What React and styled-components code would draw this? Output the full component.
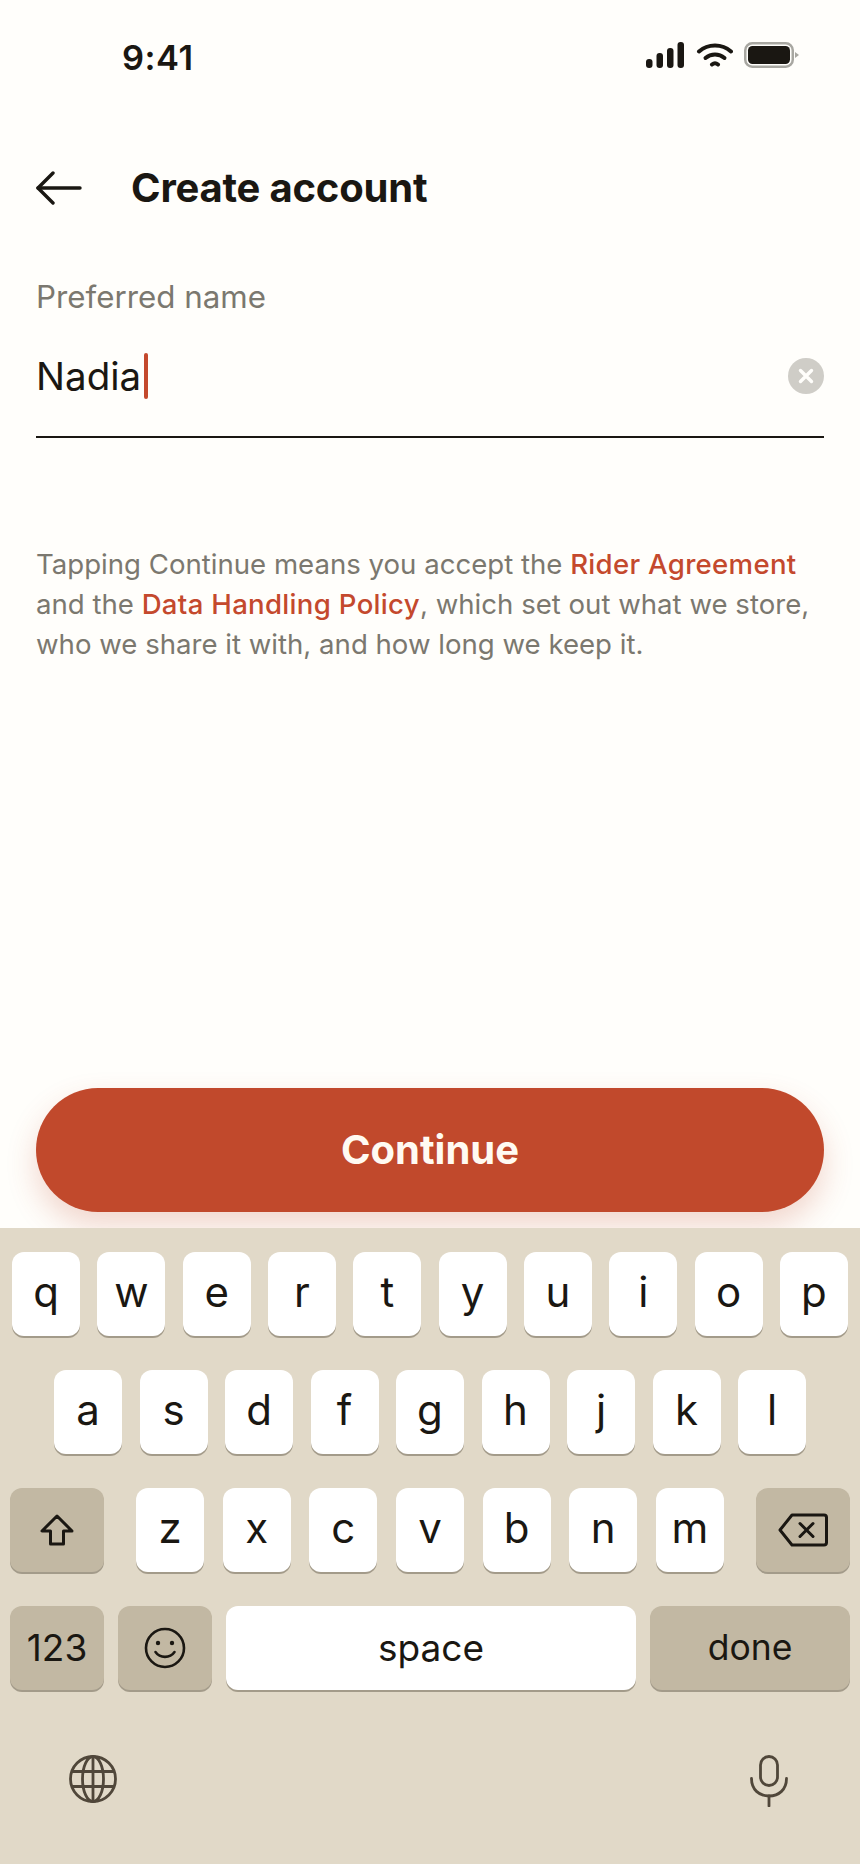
import React from "react";
import styled, { createGlobalStyle } from "styled-components";

const GlobalStyle = createGlobalStyle`
  html, body {
    margin: 0;
    padding: 0;
    background: #fffefb;
  }
  * {
    box-sizing: border-box;
  }
`;

const ROW_ONE = ["q", "w", "e", "r", "t", "y", "u", "i", "o", "p"];
const ROW_TWO = ["a", "s", "d", "f", "g", "h", "j", "k", "l"];
const ROW_THREE = ["z", "x", "c", "v", "b", "n", "m"];

const SignalIcon = () => (
  <svg width="38" height="26" viewBox="0 0 38 26" fill="#1a1712">
    <rect x="0" y="17" width="6.500" height="9" rx="3" />
    <rect x="10.500" y="11" width="6.500" height="15" rx="3" />
    <rect x="21" y="6" width="6.500" height="20" rx="3" />
    <rect x="31.500" y="0" width="6.500" height="26" rx="3" />
  </svg>
);

const WifiIcon = () => (
  <svg width="38" height="24" viewBox="-2 0 38 24" fill="none" stroke="#1a1712" strokeWidth="4" strokeLinecap="round">
    <path d="M2 8.5C11 .5 25 .5 34 8.5" />
    <path d="M8.5 15C14 10.4 22 10.4 27.5 15" />
    <path d="M15 21.5C16.8 20 19.2 20 21 21.5" />
  </svg>
);

const BatteryIcon = () => (
  <svg width="55" height="26" viewBox="0 0 55 26">
    <rect x="1.25" y="1.25" width="47.5" height="23.5" rx="7" fill="none" stroke="#a8a7a1" strokeWidth="2.5" />
    <rect x="4" y="4" width="42" height="18" rx="4.5" fill="#1a1712" />
    <path d="M51 10l4 3-4 3z" fill="#a8a7a1" />
  </svg>
);

const BackIcon = () => (
  <svg width="46" height="34" viewBox="0 0 46 34" fill="none" stroke="#1a1712" strokeWidth="3.4" strokeLinecap="round" strokeLinejoin="round">
    <path d="M44 17H2" />
    <path d="M17 2L2 17l15 15" />
  </svg>
);

const ClearIcon = () => (
  <svg width="36" height="36" viewBox="0 0 36 36">
    <circle cx="18" cy="18" r="18" fill="#cfcdc7" />
    <path d="M12.5 12.5l11 11M23.5 12.5l-11 11" stroke="#fffefb" strokeWidth="3.4" strokeLinecap="round" />
  </svg>
);

const ShiftIcon = () => (
  <svg width="34" height="32" viewBox="0 0 34 32" fill="none" stroke="#1a1712" strokeWidth="3" strokeLinejoin="round">
    <path d="M17 2L2 17h8.5v13h13V17H32z" />
  </svg>
);

const DeleteIcon = () => (
  <svg width="50" height="34" viewBox="0 0 50 34" fill="none" stroke="#1a1712" strokeWidth="3" strokeLinecap="round" strokeLinejoin="round">
    <path d="M14 2h32a2.500 2.500 0 0 1 2.500 2.500v25a2.500 2.500 0 0 1-2.500 2.500H14L2 17z" />
    <path d="M22 10.500l13 13M35 10.500l-13 13" />
  </svg>
);

const SmileIcon = () => (
  <svg width="42" height="42" viewBox="0 0 42 42" fill="none" stroke="#1a1712" strokeWidth="2.600" strokeLinecap="round">
    <circle cx="21" cy="21" r="19" />
    <circle cx="14" cy="16" r="2.200" fill="#1a1712" stroke="none" />
    <circle cx="28" cy="16" r="2.200" fill="#1a1712" stroke="none" />
    <path d="M11.500 25c4.500 6.500 14.500 6.500 19 0" />
  </svg>
);

const GlobeIcon = () => (
  <svg width="48" height="48" viewBox="0 0 48 48" fill="none" stroke="#50473a" strokeWidth="2.800">
    <circle cx="24" cy="24" r="22.500" />
    <ellipse cx="24" cy="24" rx="10.500" ry="22.500" />
    <path d="M24 1.500v45M3 16.500h42M3 31.500h42" />
  </svg>
);

const MicIcon = () => (
  <svg width="38" height="52" viewBox="0 0 38 52" fill="none" stroke="#50473a" strokeWidth="2.800" strokeLinecap="round">
    <rect x="10.500" y="1.500" width="17" height="29" rx="8.500" />
    <path d="M1.500 23.500c0 11 7.500 17.500 17.500 17.500s17.500-6.500 17.500-17.500" />
    <path d="M19 41v10" />
  </svg>
);

const App = () => (
  <Screen>
    <GlobalStyle />
    <StatusBar>
      <Time>9:41</Time>
      <StatusIcons>
        <SignalIcon />
        <WifiIcon />
        <BatteryIcon />
      </StatusIcons>
    </StatusBar>
    <Header>
      <BackIcon />
      <Title>Create account</Title>
    </Header>
    <Form>
      <Label>Preferred name</Label>
      <Field>
        <Value>Nadia</Value>
        <Caret />
        <ClearSlot>
          <ClearIcon />
        </ClearSlot>
      </Field>
      <Legal>
        Tapping Continue means you accept the <LegalLink>Rider Agreement</LegalLink>
        <br />
        and the <LegalLink>Data Handling Policy</LegalLink>, which set out what we store,
        <br />
        who we share it with, and how long we keep it.
      </Legal>
    </Form>
    <ContinueButton>Continue</ContinueButton>
    <Keyboard>
      <KeyRow $width={836}>
        {ROW_ONE.map(k => (
          <Key key={k} $letter>{k}</Key>
        ))}
      </KeyRow>
      <KeyRow $width={752}>
        {ROW_TWO.map(k => (
          <Key key={k} $letter>{k}</Key>
        ))}
      </KeyRow>
      <KeyRow $width={840}>
        <Key $width={94} $fn>
          <ShiftIcon />
        </Key>
        <Letters>
          {ROW_THREE.map(k => (
            <Key key={k} $letter>{k}</Key>
          ))}
        </Letters>
        <Key $width={94} $fn>
          <DeleteIcon />
        </Key>
      </KeyRow>
      <KeyRow $width={840}>
        <Key $width={94} $fn $size={37}>123</Key>
        <Key $width={94} $fn>
          <SmileIcon />
        </Key>
        <Key $width={410} $size={37}>space</Key>
        <Key $width={200} $fn $size={35.5}>done</Key>
      </KeyRow>
      <BottomIcons>
        <GlobeIcon />
        <MicIcon />
      </BottomIcons>
    </Keyboard>
  </Screen>
);

export default App;

const Screen = styled.div`
  width: 860px;
  height: 1864px;
  display: flex;
  flex-direction: column;
  overflow: hidden;
  background: #fffefb;
  color: #1a1712;
  font-family: Inter, "Liberation Sans", sans-serif;
`;

const StatusBar = styled.div`
  height: 114px;
  padding: 0 61px 0 122px;
  display: flex;
  align-items: center;
  justify-content: space-between;
`;

const Time = styled.div`
  font-size: 34.500px;
  font-weight: 600;
  letter-spacing: 0.5px;
`;

const StatusIcons = styled.div`
  display: flex;
  align-items: center;
  gap: 11px;
  margin-top: -4px;
`;

const Header = styled.div`
  height: 148px;
  padding: 0 36px;
  display: flex;
  align-items: center;
  gap: 49px;
`;

const Title = styled.h1`
  margin: 0;
  font-size: 40px;
  font-weight: 700;
  line-height: 46px;
  letter-spacing: -0.2px;
`;

const Form = styled.div`
  padding: 17px 36px 0;
  display: flex;
  flex-direction: column;
`;

const Label = styled.div`
  font-size: 31.300px;
  line-height: 36px;
  color: #7b786f;
`;

const Field = styled.div`
  height: 123px;
  display: flex;
  align-items: center;
  border-bottom: 2px solid #1a1712;
`;

const Value = styled.span`
  font-size: 38.500px;
  line-height: 46px;
`;

const Caret = styled.span`
  width: 4px;
  height: 46px;
  margin-left: 3px;
  border-radius: 2px;
  background: #c4492d;
`;

const ClearSlot = styled.span`
  display: flex;
  margin-left: auto;
`;

const Legal = styled.p`
  margin: 106px 0 0;
  font-size: 27.600px;
  line-height: 40px;
  color: #7b786f;
  white-space: nowrap;
`;

const LegalLink = styled.span`
  color: #c4492d;
  font-weight: 500;
  letter-spacing: 0.3px;
`;

const ContinueButton = styled.button`
  height: 124px;
  margin: auto 36px 16px;
  padding: 0 0 2px;
  border: 0;
  border-radius: 62px;
  background: #c1492c;
  color: #fffaf2;
  font-family: inherit;
  font-size: 40px;
  font-weight: 700;
  box-shadow: 0 14px 30px rgba(193, 73, 44, 0.22);
`;

const Keyboard = styled.div`
  position: relative;
  height: 636px;
  padding-top: 24px;
  display: flex;
  flex-direction: column;
  align-items: center;
  gap: 34px;
  background: #e1d9c8;
`;

const KeyRow = styled.div`
  width: ${p => p.$width}px;
  display: flex;
  justify-content: space-between;
`;

const Letters = styled.div`
  width: 588px;
  display: flex;
  justify-content: space-between;
`;

const Key = styled.div`
  width: ${p => p.$width || 68}px;
  height: 84px;
  display: flex;
  align-items: center;
  justify-content: center;
  border-radius: 12px;
  background: ${p => (p.$fn ? "#c2b8a3" : "#ffffff")};
  box-shadow: 0 2px 0 #a39b8a;
  color: #1a1712;
  font-size: ${p => p.$size || 42}px;
  padding-bottom: ${p => (p.$letter ? 6 : 1)}px;
`;

const BottomIcons = styled.div`
  width: 100%;
  margin-top: 31px;
  padding: 0 72px 0 69px;
  display: flex;
  justify-content: space-between;
  align-items: flex-start;
`;
